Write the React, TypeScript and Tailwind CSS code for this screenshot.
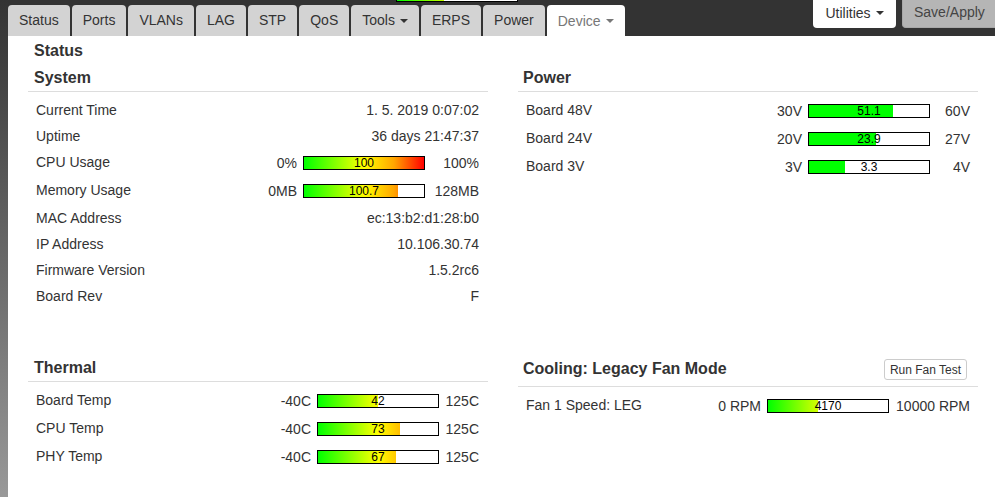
import React from "react";

const GRAD =
  "bg-[linear-gradient(to_right,#00ff00_0%,#ffff00_50%,#ffa500_75%,#ff0000_100%)]";

function Caret({ className = "" }: { className?: string }) {
  return (
    <span
      className={
        "inline-block w-0 h-0 border-l-[4px] border-r-[4px] border-t-[4px] border-l-transparent border-r-transparent align-middle " +
        className
      }
    />
  );
}

function Bar({ pct, text, solid }: { pct: number; text: string; solid?: boolean }) {
  return (
    <div className="relative w-[122px] h-[14px] border border-black bg-white shrink-0">
      <div className="absolute left-0 top-0 h-full overflow-hidden" style={{ width: pct + "%" }}>
        <div className={"w-[120px] h-full " + (solid ? "bg-[#00ff00]" : GRAD)} />
      </div>
      <div className="absolute inset-0 flex items-center justify-center text-[12px] leading-none text-black">
        {text}
      </div>
    </div>
  );
}

function TextRow({ label, value }: { label: string; value: string }) {
  return (
    <div className="flex justify-between items-center h-[26px] leading-5">
      <span>{label}</span>
      <span>{value}</span>
    </div>
  );
}

function BarRow({
  label,
  min,
  max,
  pct,
  text,
  maxW,
  solid,
}: {
  label: string;
  min: string;
  max: string;
  pct: number;
  text: string;
  maxW: string;
  solid?: boolean;
}) {
  return (
    <div className="flex justify-between items-start h-[28px]">
      <span className="pt-[3px] leading-5">{label}</span>
      <div className="flex items-center pt-[7px] leading-[14px]">
        <span className="mr-[6px]">{min}</span>
        <Bar pct={pct} text={text} solid={solid} />
        <span className={"text-right " + maxW}>{max}</span>
      </div>
    </div>
  );
}

function Heading({ children, pl = "pl-[6px]" }: { children: React.ReactNode; pl?: string }) {
  return (
    <div className={"pt-[3px] pb-[3px] leading-5 border-b border-[#dddddd] text-[16px] font-bold " + pl}>
      {children}
    </div>
  );
}

const tabs = ["Status", "Ports", "VLANs", "LAG", "STP", "QoS", "Tools", "ERPS", "Power"];

export default function App() {
  return (
    <div className="flex w-[995px] h-[497px] overflow-hidden bg-white text-[#333333] text-[14px] font-['Liberation_Sans',Arial,sans-serif]">
      <div className="w-2 shrink-0 bg-[linear-gradient(to_bottom,#333333,#999999)]" />
      <div className="flex-1 flex flex-col min-w-0">
        {/* top bar */}
        <div className="relative h-9 bg-[#333333] flex justify-between items-start shrink-0">
          <div className="absolute left-[388px] top-[-12px] w-[122px] h-[14px] border border-black bg-white overflow-hidden">
            <div className="w-[39%] h-full overflow-hidden">
              <div className={"w-[120px] h-full " + GRAD} />
            </div>
          </div>
          <div className="flex items-end gap-[2px] h-9">
            {tabs.map((t) => (
              <div
                key={t}
                className="h-[31px] px-[11px] bg-[#d3d3d3] rounded-t-[4px] flex items-center text-[#333333] whitespace-nowrap"
              >
                {t}
                {t === "Tools" && <Caret className="ml-[5px] border-t-[#333333]" />}
              </div>
            ))}
            <div className="h-[32px] mb-[-1px] px-[11px] bg-white rounded-t-[4px] flex items-center text-[#777777] whitespace-nowrap">
              Device
              <Caret className="ml-[5px] border-t-[#777777]" />
            </div>
          </div>
          <div className="flex gap-[6px] mr-[-3px]">
            <div className="h-[28px] w-[83px] bg-white rounded-b-[4px] flex items-center justify-center pb-[2px] text-[#333333] whitespace-nowrap">
              Utilities
              <Caret className="ml-[5px] border-t-[#333333]" />
            </div>
            <div className="h-[28px] w-[96px] bg-[#b5b5b5] border border-t-0 border-[#a8a8a8] rounded-bl-[4px] flex items-center pl-[11px] pb-[2px] text-[#444444] whitespace-nowrap">
              Save/Apply
            </div>
          </div>
        </div>

        {/* content */}
        <div className="pl-5 pt-[5px]">
          <div className="pl-[6px] text-[16px] font-bold leading-5 h-5">Status</div>
          <div className="grid grid-cols-[460px_460px] gap-x-[30px] mt-[4px]">
            <section className="min-h-[290px]">
              <Heading>System</Heading>
              <div className="pt-[5px] pl-[8px] pr-[9px]">
                <TextRow label="Current Time" value="1. 5. 2019 0:07:02" />
                <TextRow label="Uptime" value="36 days 21:47:37" />
                <BarRow label="CPU Usage" min="0%" max="100%" pct={100} text="100" maxW="w-[54px]" />
                <BarRow label="Memory Usage" min="0MB" max="128MB" pct={78.7} text="100.7" maxW="w-[54px]" />
                <TextRow label="MAC Address" value="ec:13:b2:d1:28:b0" />
                <TextRow label="IP Address" value="10.106.30.74" />
                <TextRow label="Firmware Version" value="1.5.2rc6" />
                <TextRow label="Board Rev" value="F" />
              </div>
            </section>
            <section className="min-h-[290px]">
              <Heading pl="pl-[5px]">Power</Heading>
              <div className="pt-[5px] pl-[8px] pr-[8px]">
                <BarRow label="Board 48V" min="30V" max="60V" pct={70.3} text="51.1" maxW="w-[40px]" solid />
                <BarRow label="Board 24V" min="20V" max="27V" pct={55.7} text="23.9" maxW="w-[40px]" solid />
                <BarRow label="Board 3V" min="3V" max="4V" pct={30} text="3.3" maxW="w-[40px]" solid />
              </div>
            </section>
            <section>
              <Heading>Thermal</Heading>
              <div className="pt-[5px] pl-[8px] pr-[9px]">
                <BarRow label="Board Temp" min="-40C" max="125C" pct={49.7} text="42" maxW="w-[40px]" />
                <BarRow label="CPU Temp" min="-40C" max="125C" pct={68.5} text="73" maxW="w-[40px]" />
                <BarRow label="PHY Temp" min="-40C" max="125C" pct={64.8} text="67" maxW="w-[40px]" />
              </div>
            </section>
            <section>
              <div className="flex justify-between items-center pt-[4px] pb-[6px] border-b border-[#dddddd] pl-[5px] pr-[11px]">
                <span className="text-[16px] font-bold leading-5 mt-[-2px]">Cooling: Legacy Fan Mode</span>
                <button className="h-[21px] w-[83px] border border-[#cccccc] rounded-[3px] bg-white text-[12px] text-[#333333] leading-none">
                  Run Fan Test
                </button>
              </div>
              <div className="pt-[5px] pl-[8px] pr-[8px]">
                <BarRow label="Fan 1 Speed: LEG" min="0 RPM" max="10000 RPM" pct={41.7} text="4170" maxW="w-[81px]" />
              </div>
            </section>
          </div>
        </div>
      </div>
    </div>
  );
}
